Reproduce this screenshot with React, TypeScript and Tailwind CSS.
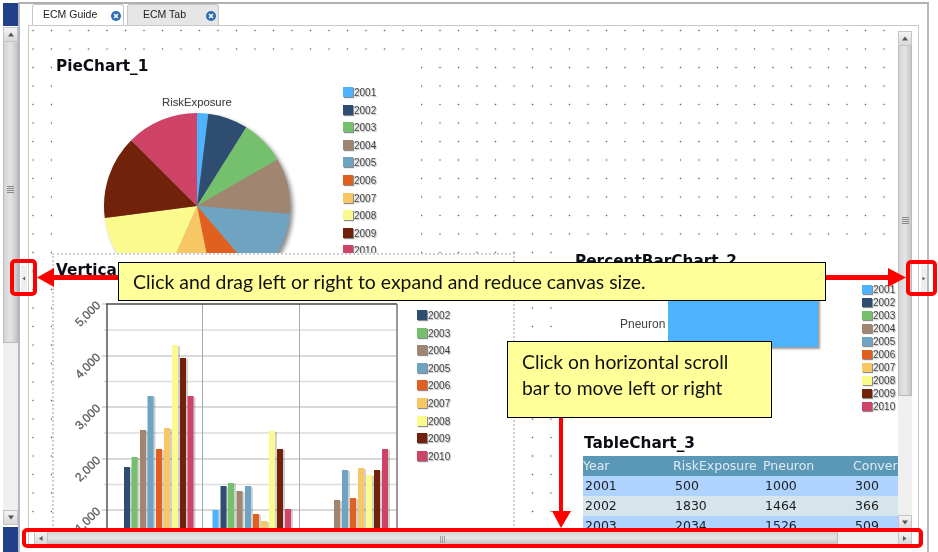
import React from "react";

const C = ["#4db3ff", "#2e4d70", "#75c06c", "#a08570", "#6ea4c2", "#e2601f", "#f8c765", "#fafb8c", "#72210b", "#cf4368"];
const YEARS = ["2001", "2002", "2003", "2004", "2005", "2006", "2007", "2008", "2009", "2010"];

function pieSlice(cx: number, cy: number, r: number, a0: number, a1: number) {
  const p = (a: number) => {
    const t = (a * Math.PI) / 180;
    return `${(cx + r * Math.sin(t)).toFixed(2)} ${(cy - r * Math.cos(t)).toFixed(2)}`;
  };
  return `M${cx} ${cy}L${p(a0)}A${r} ${r} 0 ${a1 - a0 > 180 ? 1 : 0} 1 ${p(a1)}Z`;
}

function Pie() {
  const stops = [0, 7, 32, 60, 95, 139.5, 168.6, 203.6, 262.6, 315, 360];
  return (
    <svg width="220" height="215" className="block drop-shadow-[3px_3px_2px_rgba(0,0,0,0.45)]">
      {C.map((c, i) => (
        <path key={c} d={pieSlice(104, 112, 93, stops[i], stops[i + 1])} fill={c} />
      ))}
    </svg>
  );
}

function Legend({ from = 0, step, sw = "h-[10px]" }: { from?: number; step: string; sw?: string }) {
  return (
    <div className={`flex flex-col ${step}`}>
      {YEARS.slice(from).map((y, i) => (
        <div key={y} className="flex items-center h-[10px] gap-px text-[10px] leading-none text-[#444] font-['Liberation_Sans',sans-serif]">
          <span className={`w-[10px] ${sw} shadow-[1px_1px_1px_rgba(0,0,0,0.45)]`} style={{ background: C[i + from] }} />
          <span className="pt-[2px] [text-shadow:1px_1px_1px_rgba(0,0,0,0.3)]">{y}</span>
        </div>
      ))}
    </div>
  );
}

const GROUPS: [number, number, number][] = [
  [124, 467, 1], [131.5, 457, 2], [140, 430, 3], [147.5, 396, 4], [156, 449, 5], [164, 428, 6], [172, 345, 7], [180, 358, 8], [187.5, 396, 9],
  [212.5, 510, 0], [220.5, 486, 1], [228, 483, 2], [236.5, 491, 3], [245, 486, 4], [253, 514, 5], [261, 521, 6], [269, 431, 7], [277, 449, 8], [285, 509, 9],
  [334, 500, 3], [342, 470, 4], [350, 498, 5], [358, 468, 6], [366, 475, 7], [374, 470, 8], [382, 449, 9],
];

function BarChart() {
  const x0 = 52, y0 = 253;
  const majors = [304, 356, 407, 459, 510];
  const minors = [330, 381.5, 433, 484.5];
  const labels: [string, number][] = [["5,000", 304], ["4,000", 356], ["3,000", 407], ["2,000", 459], ["1,000", 510]];
  return (
    <svg width="360" height="277" className="block">
      <g transform={`translate(${-x0} ${-y0})`}>
        {minors.map((y) => <line key={y} x1="104" x2="397" y1={y} y2={y} stroke="#ddd" strokeWidth="1.5" />)}
        {majors.map((y) => <line key={y} x1="102" x2="397" y1={y} y2={y} stroke="#ccc" strokeWidth="1.5" />)}
        <line x1="202.5" x2="202.5" y1="304" y2="530" stroke="#aaa" />
        <line x1="299.5" x2="299.5" y1="304" y2="530" stroke="#aaa" />
        {GROUPS.map(([x, y, c]) => (
          <g key={`${x}-${c}`}>
            <rect x={x + 2} y={y + 1} width="6" height={560 - y} fill="#000" opacity="0.18" />
            <rect x={x} y={y} width="6" height={560 - y} fill={C[c]} />
          </g>
        ))}
        <line x1="107" x2="107" y1="304" y2="530" stroke="#555" strokeWidth="1.5" />
        <line x1="106" x2="397" y1="304" y2="304" stroke="#555" strokeWidth="1.5" />
        <line x1="397" x2="397" y1="304" y2="530" stroke="#777" strokeWidth="1.5" />
        {labels.map(([t, y]) => (
          <text key={t} x="99" y={y + 3} textAnchor="end" transform={`rotate(-45 99 ${y})`} fontFamily="'Liberation Sans', sans-serif" fontSize="12" fill="#555" stroke="#666" strokeWidth="0.3">
            {t}
          </text>
        ))}
      </g>
    </svg>
  );
}

function Arrow({ d }: { d: "up" | "down" | "left" | "right" }) {
  const p = { up: "M4 1.5L7 5.5H1Z", down: "M4 5.5L7 1.5H1Z", left: "M2 3.5L5.5 1V6Z", right: "M5.5 3.5L2 1V6Z" }[d];
  return (
    <svg width="8" height="7" viewBox="0 0 8 7">
      <path d={p} fill="#555" />
    </svg>
  );
}

function VScroll({ thumb, gripAt }: { thumb: string; gripAt: string }) {
  return (
    <div className="flex flex-col h-full w-full bg-[#efefef]">
      <div className="h-[15px] shrink-0 flex items-center justify-center bg-gradient-to-b from-[#f4f4f4] to-[#d8d8d8] border border-[#c4c4c4]"><Arrow d="up" /></div>
      <div className={`${thumb} shrink-0 relative border-x border-b border-[#bbb] bg-gradient-to-r from-[#d4d4d4] via-[#e4e4e4] to-[#c6c6c6] flex justify-center`}>
        <div className={`${gripAt} w-[7px] h-[7px] flex flex-col justify-between`}>
          <div className="h-px bg-[#888]" /><div className="h-px bg-[#888]" /><div className="h-px bg-[#888]" /><div className="h-px bg-[#888]" />
        </div>
      </div>
      <div className="flex-1" />
      <div className="h-[15px] shrink-0 flex items-center justify-center bg-gradient-to-b from-[#f4f4f4] to-[#d8d8d8] border border-[#c4c4c4]"><Arrow d="down" /></div>
    </div>
  );
}

function Tab({ label, active, w }: { label: string; active?: boolean; w: string }) {
  return (
    <div className={`${w} h-[21px] flex items-center rounded-t-[3px] border border-b-0 border-[#c4c8cc] text-[10.5px] text-[#222] font-['Liberation_Sans',sans-serif] ${active ? "bg-white" : "bg-[#e6e6e6]"}`}>
      <span className={active ? "ml-[10px] flex-1" : "ml-[15px] flex-1"}>{label}</span>
      <span className="mr-[2px] mt-px w-[10px] h-[10px] rounded-full bg-[#2a6db5] text-white flex items-center justify-center">
        <svg width="6" height="6" viewBox="0 0 6 6"><path d="M1 1L5 5M5 1L1 5" stroke="#fff" strokeWidth="1.5" /></svg>
      </span>
    </div>
  );
}

const ROWS = [
  { c: "bg-[#aed3ff]", v: ["2001", "500", "1000", "300"] },
  { c: "bg-[#d6e5ec]", v: ["2002", "1830", "1464", "366"] },
  { c: "bg-[#aed3ff]", v: ["2003", "2034", "1526", "509"] },
];

function Table() {
  return (
    <div className="font-['DejaVu_Sans',sans-serif] text-[12.5px] leading-none w-[315px] overflow-hidden">
      <div className="grid grid-cols-[90px_90px_90px_45px] h-[20px] pt-px items-center bg-[#5b98b8] text-[#dfeaf0] whitespace-nowrap">
        <span>Year</span><span>RiskExposure</span><span>Pneuron</span><span>Conver</span>
      </div>
      {ROWS.map((r) => (
        <div key={r.v[0]} className={`grid grid-cols-[90px_90px_90px_45px] h-[20px] pt-px items-center pl-px text-[#1c1c1c] ${r.c}`}>
          {r.v.map((x) => <span key={x} className="pl-px">{x}</span>)}
        </div>
      ))}
    </div>
  );
}

const TITLE = "font-['DejaVu_Sans',sans-serif] font-bold text-[15.3px] leading-none text-[#0c0c14]";

export default function App() {
  return (
    <div className="relative w-[938px] h-[552px] bg-white overflow-hidden flex font-['Liberation_Sans',sans-serif] blur-[0.3px]">
      {/* left rail */}
      <div className="ml-[3px] mt-[3px] w-[15px] flex flex-col shrink-0">
        <div className="h-[23px] bg-[#22408a]" />
        <div className="mt-px h-[498px]"><VScroll thumb="h-[301px]" gripAt="mt-[144px]" /></div>
        <div className="mt-[2px] flex-1 bg-[#22408a]" />
      </div>

      {/* main frame */}
      <div className="w-[911px] h-full mt-[2px] border-t-2 border-l-2 border-r-[2px] border-[#b4b8c4] border-t-[#b0b0b0] flex">
        {/* left handle */}
        <div className="w-[8px] shrink-0 relative">
          <div className="mt-[261px] ml-px w-[6px] h-[27px] bg-[#efefef] flex items-center justify-center"><Arrow d="left" /></div>
        </div>

        {/* panel */}
        <div className="w-[891px] flex flex-col">
          <div className="h-[21px] flex gap-[3px] pl-[4px] shrink-0">
            <Tab label="ECM Guide" active w="w-[92px]" />
            <Tab label="ECM Tab" w="w-[92px]" />
          </div>
          <div className="h-[523px] border-l border-t border-r border-[#c8c8c8] flex flex-col">
            <div className="flex h-[504px] shrink-0">
              {/* canvas */}
              <div className="relative w-[869px] h-full overflow-hidden bg-[radial-gradient(circle,#666_0.9px,transparent_1px)] bg-[size:18.5px_18.5px] bg-[position:-5.25px_-4.75px]">
                {/* Pie widget */}
                <div className="absolute left-[23px] top-[26px] w-[369px] h-[201px] bg-white overflow-hidden">
                  <div className={`${TITLE} ml-[4px] mt-[7px]`}>PieChart_1</div>
                  <div className="absolute left-[110px] top-[42px] text-[11.3px] text-[#444] [text-shadow:0_0_1px_rgba(0,0,0,0.25)]">RiskExposure</div>
                  <div className="absolute left-[41px] top-[42px]"><Pie /></div>
                  <div className="absolute left-[291px] top-[35px]"><Legend step="gap-[7.6px]" /></div>
                </div>

                {/* Bar widget */}
                <div className="absolute left-[23px] top-[227px] w-[463px] h-[277px] bg-white border-l-2 border-t-2 border-r-2 border-dotted border-[#cfcfcf]">
                  <div className={`${TITLE} ml-[2px] mt-[8px]`}>Vertical</div>
                  <div className="absolute left-[-2px] top-[-2px]"><BarChart /></div>
                  <div className="absolute left-[363px] top-[55px]"><Legend from={1} step="gap-[7.6px]" /></div>
                </div>

                {/* Percent bar + table widget */}
                <div className="absolute left-[531px] top-[217px] w-[338px] h-[287px] bg-white">
                  <div className={`${TITLE} absolute left-[15px] top-[11px]`}>PercentBarChart_2</div>
                  <div className="absolute left-[60px] top-[72px] text-[12px] text-[#444]">Pneuron</div>
                  <div className="absolute left-[108px] top-[51px] w-[150px] h-[53px] bg-[#4db3ff] shadow-[2px_2px_2px_rgba(0,0,0,0.4)]" />
                  <div className="absolute left-[302px] top-[41px]"><Legend step="gap-[3px]" sw="h-[9px]" /></div>
                  <div className={`${TITLE} absolute left-[24px] top-[193px]`}>TableChart_3</div>
                  <div className="absolute left-[23px] top-[213px]"><Table /></div>
                </div>
              </div>
              {/* v scroll */}
              <div className="w-[14px] pt-[5px] shrink-0 h-full"><VScroll thumb="h-[350px]" gripAt="mt-[171px]" /></div>
            </div>
            {/* h scroll */}
            <div className="ml-[5px] mt-[1px] h-[14px] w-[878px] flex bg-[#efefef] shrink-0">
              <div className="w-[14px] shrink-0 flex items-center justify-center bg-gradient-to-b from-[#f4f4f4] to-[#d8d8d8] border border-[#c4c4c4]"><Arrow d="left" /></div>
              <div className="w-[790px] shrink-0 flex items-center justify-center border-y border-r border-[#bbb] bg-gradient-to-b from-[#d4d4d4] via-[#e6e6e6] to-[#c2c2c2] text-[7px] leading-none text-[#777]">|||</div>
              <div className="flex-1" />
              <div className="w-[14px] shrink-0 flex items-center justify-center bg-gradient-to-b from-[#f4f4f4] to-[#d8d8d8] border border-[#c4c4c4]"><Arrow d="right" /></div>
            </div>
          </div>
        </div>

        {/* right handle */}
        <div className="flex-1 relative">
          <div className="mt-[261px] ml-[2px] w-[6px] h-[27px] bg-[#efefef] flex items-center justify-center"><Arrow d="right" /></div>
        </div>
      </div>

      {/* annotations */}
      <svg className="absolute left-0 top-0 pointer-events-none" width="938" height="552">
        <path d="M54 275H118V280H54V287L37 277.500L54 268Z" fill="#f00" />
        <path d="M826 275H888V268L906 277.500L888 287V280H826Z" fill="#f00" />
        <path d="M559 418H563V511H571L561 528L552 511H559Z" fill="#f00" />
      </svg>
      <div className="absolute left-[10px] top-[259px] w-[27px] h-[37px] rounded-[5px] border-[4px] border-[#f00]" />
      <div className="absolute left-[906px] top-[260px] w-[31px] h-[36px] rounded-[5px] border-[4px] border-[#f00]" />
      <div className="absolute left-[22px] top-[528px] w-[901px] h-[20px] rounded-[5px] border-[4px] border-[#f00]" />
      <div className="absolute left-[118px] top-[262px] w-[708px] h-[39px] bg-[#ffff99] border border-black flex items-center pl-[14px] font-['Lato',sans-serif] text-[19.4px] text-[#111]">
        Click and drag left or right to expand and reduce canvas size.
      </div>
      <div className="absolute left-[507px] top-[341px] w-[265px] h-[77px] bg-[#ffff99] border border-black pl-[14px] pt-[7px] font-['Lato',sans-serif] text-[19.3px] leading-[26px] text-[#111]">
        <div>Click on horizontal scroll</div>
        <div>bar to move left or right</div>
      </div>
    </div>
  );
}
